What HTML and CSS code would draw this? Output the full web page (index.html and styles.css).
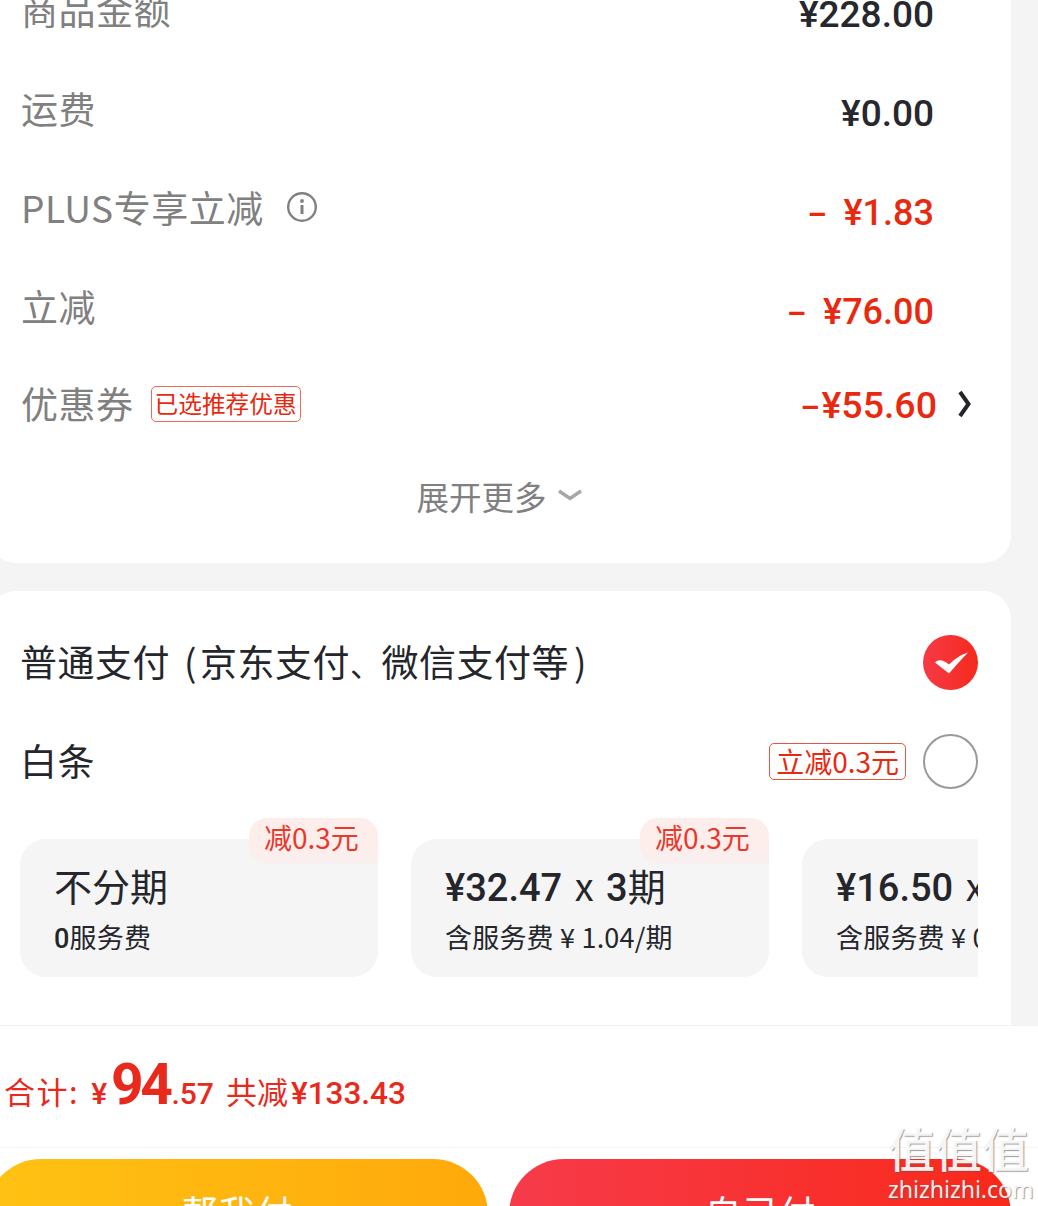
FILE: index.html
```html
<!DOCTYPE html>
<html lang="zh-CN">
<head>
  <meta charset="UTF-8">
  <title>确认订单</title>
  <link rel="stylesheet" href="styles.css">
</head>
<body>
  <div class="page">
    <div class="scroll">
      <div class="card price-card">
        <div class="row">
          <span class="label">商品金额</span>
          <span class="amount">¥228.00</span>
        </div>
        <div class="row">
          <span class="label">运费</span>
          <span class="amount">¥0.00</span>
        </div>
        <div class="row">
          <span class="label">PLUS专享立减</span>
          <svg class="info" width="32" height="32" viewBox="0 0 32 32">
            <circle cx="16" cy="16" r="13.8" fill="none" stroke="#808080" stroke-width="2.4"/>
            <circle cx="16" cy="10" r="1.9" fill="#808080"/>
            <path d="M16 14v9" fill="none" stroke="#808080" stroke-width="3"/>
          </svg>
          <span class="amount red minus-amount"><i class="dash">–</i>¥1.83</span>
        </div>
        <div class="row">
          <span class="label">立减</span>
          <span class="amount red minus-amount"><i class="dash">–</i>¥76.00</span>
        </div>
        <div class="row coupon-row">
          <span class="label">优惠券</span>
          <span class="coupon-tag">已选推荐优惠</span>
          <span class="amount red coupon-amount"><i class="dash tight">–</i>¥55.60</span>
          <svg class="chevron" width="14" height="28" viewBox="0 0 14 28">
            <path d="M2 2L10.5 14L2 26" fill="none" stroke="#24262b" stroke-width="4"/>
          </svg>
        </div>
        <div class="more">
          <span>展开更多</span>
          <svg width="26" height="12" viewBox="0 0 26 12">
            <path d="M2 2L13 9.5L24 2" fill="none" stroke="#a6a6a6" stroke-width="3.4"/>
          </svg>
        </div>
      </div>

      <div class="card pay-card">
        <div class="pay-row">
          <span class="pay-name">普通支付<span class="paren-l">(</span>京东支付<span class="comma">、</span>微信支付等<span class="paren-r">)</span></span>
          <span class="radio checked">
            <svg width="36" height="26" viewBox="0 0 36 26">
              <path d="M2 12.5C6 8.5 11 10.5 16 14.5C21 9.5 28 4.5 35 2.5C28 9.5 21 17.5 16 23.5C11 19.5 6 15.5 2 12.5Z" fill="#fff"/>
            </svg>
          </span>
        </div>
        <div class="pay-row">
          <span class="pay-name">白条</span>
          <span class="off-tag">立减0.3元</span>
          <span class="radio"></span>
        </div>
        <div class="plans">
          <div class="plan">
            <span class="plan-badge">减0.3元</span>
            <div class="plan-title">不分期</div>
            <div class="plan-sub"><b>0</b>服务费</div>
          </div>
          <div class="plan">
            <span class="plan-badge">减0.3元</span>
            <div class="plan-title"><b>¥32.47</b> x <b>3</b>期</div>
            <div class="plan-sub">含服务费 ¥ 1.04/期</div>
          </div>
          <div class="plan">
            <div class="plan-title"><b>¥16.50</b> x <b>6</b>期</div>
            <div class="plan-sub">含服务费 ¥ 0.52/期</div>
          </div>
        </div>
      </div>
    </div>

    <div class="footer">
      <div class="total">
        <span class="total-label">合计:</span>
        <span class="yen">¥</span><span class="big">94</span><span class="cents">.57</span>
        <span class="saved">共减<b>¥133.43</b></span>
      </div>
      <div class="actions">
        <button class="btn yellow">帮我付</button>
        <button class="btn redbtn">自己付</button>
      </div>
    </div>

    <div class="watermark">
      <div class="wm-cn">值值值</div>
      <div class="wm-en">zhizhizhi.com</div>
    </div>
  </div>
</body>
</html>
```

FILE: styles.css
```css
* {
  box-sizing: border-box;
}

body {
  margin: 0;
  font-family: "Noto Sans CJK SC", "Noto Sans", sans-serif;
}

.page {
  position: relative;
  height: 1206px;
  overflow: hidden;
  display: flex;
  flex-direction: column;
  background-color: #fff;
}

.scroll {
  height: 1025px;
  flex: none;
  overflow: hidden;
  background-color: #f4f4f4;
}

.card {
  margin-left: -12px;
  width: 1023px;
  background-color: #fff;
  border-radius: 28px;
}

/* price card */
.price-card {
  margin-top: -36px;
  height: 599px;
  padding: 0 0 0 33px;
  border-radius: 0 0 28px 28px;
}

.row {
  display: flex;
  align-items: center;
  height: 99px;
  padding-right: 77px;
}

.label {
  margin-bottom: 10px;
  font-size: 37px;
  letter-spacing: 0.5px;
  color: #808080;
}

.amount {
  margin-left: auto;
  margin-top: 2px;
  font-family: Roboto, sans-serif;
  font-weight: 500;
  font-size: 37px;
  color: #26282d;
}

.red {
  color: #e8290f;
}

.minus-amount {
  font-size: 36px;
}

.dash {
  margin-right: 17px;
  font-size: 30px;
  font-weight: 700;
  font-style: normal;
}

.dash.tight {
  margin-right: 2px;
}

.info {
  margin-left: 22px;
  margin-bottom: 10px;
}

.coupon-row {
  height: 88px;
  padding-right: 39px;
}

.coupon-row .label {
  margin-bottom: 2px;
}

.coupon-amount {
  font-size: 37.5px;
}

.coupon-tag {
  margin-left: 17px;
  padding: 0 3px;
  height: 36px;
  line-height: 33px;
  font-size: 23.7px;
  color: #e8290f;
  border: 1px solid #ee6a55;
  border-radius: 5px;
  white-space: nowrap;
}

.chevron {
  margin-left: 21px;
}

.more {
  display: flex;
  align-items: center;
  justify-content: center;
  gap: 10px;
  margin: 20px 0 0 -33px;
  font-size: 32.5px;
  color: #808080;
  height: 54px;
}

/* payment card */
.pay-card {
  margin-top: 28px;
  height: 500px;
  padding: 22px 33px 0 32px;
}

.pay-row {
  display: flex;
  align-items: center;
  height: 99px;
}

.pay-name {
  margin-bottom: 4px;
  font-size: 37px;
  letter-spacing: 0.5px;
  color: #24262b;
  white-space: nowrap;
}

.paren-l {
  margin: 0 3px 0 14px;
}

.paren-r {
  margin-left: 5px;
}

.comma {
  font-size: 31px;
}

.radio {
  display: flex;
  align-items: center;
  justify-content: center;
  margin-left: auto;
  width: 55px;
  height: 55px;
  border: 2px solid #999;
  border-radius: 50%;
}

.radio.checked {
  border: 0;
  background: linear-gradient(90deg, #f73a48, #f52a1c);
}

.off-tag {
  margin-left: auto;
  margin-right: 17px;
  height: 37px;
  padding: 0 6px;
  line-height: 35px;
  font-size: 28px;
  color: #e8290f;
  border: 1px solid #e5573f;
  border-radius: 5px;
  white-space: nowrap;
}

.off-tag + .radio {
  margin-left: 0;
}

.plans {
  display: flex;
  gap: 33px;
  margin-top: 7px;
  overflow: hidden;
  padding-top: 21px;
}

.plan {
  position: relative;
  flex: none;
  width: 358px;
  height: 138px;
  padding: 24px 0 0 34px;
  background-color: #f5f5f6;
  border-radius: 26px;
  color: #24262b;
}

.plan-badge {
  position: absolute;
  top: -21px;
  right: 0;
  width: 129px;
  height: 46px;
  padding-left: 15px;
  line-height: 38px;
  font-size: 28px;
  color: #e8392c;
  background: linear-gradient(180deg, #fdeeec 65%, #f8f0f0);
  border-radius: 18px 18px 0 18px;
  white-space: nowrap;
}

.plan-title {
  font-size: 38px;
  line-height: 44px;
  word-spacing: 4px;
  white-space: nowrap;
}

.plan-title b,
.plan-sub b {
  font-family: Roboto, sans-serif;
  font-weight: 500;
  line-height: 0;
}

.plan-sub {
  margin-top: 12px;
  font-size: 27px;
  line-height: 36px;
  letter-spacing: 0.2px;
  white-space: nowrap;
}

/* footer */
.footer {
  flex: 1;
  border-top: 1px solid #f2f2f2;
  overflow: hidden;
}

.total {
  display: flex;
  align-items: baseline;
  height: 122px;
  padding: 25px 0 0 4px;
  color: #e8291c;
  border-bottom: 1px solid #f4f4f4;
  white-space: nowrap;
}

.total-label {
  font-size: 31px;
  letter-spacing: 1.5px;
  margin-right: 12px;
}

.yen {
  margin-right: 4px;
  font-family: Roboto, sans-serif;
  font-weight: 500;
  font-size: 30px;
}

.big {
  font-family: Roboto, sans-serif;
  font-weight: 700;
  font-size: 57px;
  letter-spacing: -3.5px;
}

.cents {
  margin-left: 2px;
  font-family: Roboto, sans-serif;
  font-weight: 500;
  font-size: 30px;
}

.saved {
  margin-left: 12px;
  font-size: 31px;
}

.saved b {
  margin-left: 3px;
  font-family: Roboto, sans-serif;
  font-weight: 500;
  font-size: 31.5px;
}

.actions {
  display: flex;
  gap: 21px;
  margin: 11px 0 0 -14px;
  width: 1025px;
}

.btn {
  flex: 1;
  height: 110px;
  padding: 0 0 4px;
  border: 0;
  border-radius: 55px;
  color: #fff;
  font-family: inherit;
  font-size: 37px;
  font-weight: 400;
}

.yellow {
  background: linear-gradient(90deg, #ffc213, #ffa90b);
}

.redbtn {
  background: linear-gradient(90deg, #f73b4b, #f9291a);
}

/* site watermark over the screenshot */
.watermark {
  position: absolute;
  left: 888px;
  top: 1121px;
  width: 150px;
  color: rgba(255, 255, 255, 0.92);
  text-shadow: 1px 1px 1px rgba(90, 90, 90, 0.6);
  white-space: nowrap;
}

.wm-cn {
  font-size: 47px;
  line-height: 52px;
  font-weight: 500;
}

.wm-en {
  margin-top: 3px;
  font-family: "Noto Sans", sans-serif;
  font-size: 23px;
  line-height: 26px;
}
```
